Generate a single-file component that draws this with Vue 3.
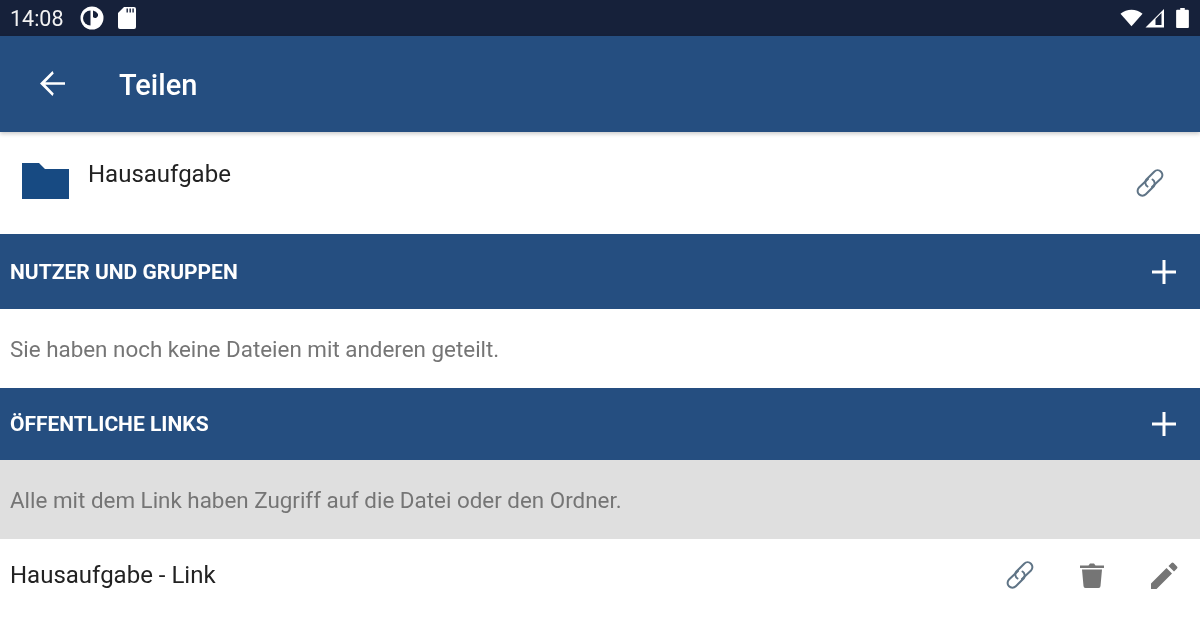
<script setup>
const sections = {
  users: 'NUTZER UND GRUPPEN',
  links: 'ÖFFENTLICHE LINKS'
}
</script>

<template>
  <div class="screen">
    <!-- status bar -->
    <div class="status-bar">
      <span class="clock">14:08</span>
      <svg class="st-circle" viewBox="0 0 24 24" width="24" height="24">
        <circle cx="12" cy="12" r="11.500" fill="#fff" />
        <path d="M10.500 4.500a7.500 7.500 0 0 0 0 15z" fill="#16213a" />
        <path d="M13 4.600a7.500 7.500 0 0 1 5 3.400 3 3 0 0 1-5 3z" fill="#16213a" />
      </svg>
      <svg class="st-sd" viewBox="0 0 18 22" width="18" height="22">
        <path d="M6 0h10a2 2 0 0 1 2 2v18a2 2 0 0 1-2 2H2a2 2 0 0 1-2-2V6z" fill="#fff" />
        <path d="M8.500 1.500h1.400v4H8.500zM11.500 1.500h1.400v4h-1.400zM14.400 1.500h1.400v4h-1.400z" fill="#16213a" />
      </svg>
      <div class="st-right">
        <svg viewBox="0 0 24 18" width="23" height="18">
          <path d="M12 17.500 0.500 4.500C4 1.800 7.800 0.500 12 0.500s8 1.300 11.500 4z" fill="#fff" />
        </svg>
        <svg viewBox="0 0 20 20" width="20" height="20">
          <path d="M0.500 19.500 19 1v18.500z" fill="#fff" />
          <path d="M10.500 14V11L16.500 5v12h-6z" fill="#16213a" />
        </svg>
        <svg class="st-battery" viewBox="0 0 14 22" width="13" height="20">
          <path d="M4.500 0h5v2H13a1 1 0 0 1 1 1v18a1 1 0 0 1-1 1H1a1 1 0 0 1-1-1V3a1 1 0 0 1 1-1h3.500z" fill="#fff" />
        </svg>
      </div>
    </div>

    <header class="toolbar">
      <svg class="back" viewBox="4 4 16 16" width="25" height="25">
        <path d="M20 11.200H7.400l5.400-5.600L12 4l-8 8 8 8 .8-1.600-5.400-5.600H20z" fill="#fff" />
      </svg>
      <h1>Teilen</h1>
    </header>

    <section class="file-row">
      <svg class="folder" viewBox="0 0 47 36" width="47" height="36">
        <path d="M0 0h17l6 6h24v30H0z" fill="#174a82" />
      </svg>
      <span class="file-name">Hausaufgabe</span>
      <svg class="file-link" viewBox="0 0 32 32" width="32" height="32">
        <g fill="none" stroke="#5f7486" stroke-width="2" stroke-linecap="round">
          <path d="M14 12 5 20.500a4.800 4.800 0 0 0 6.800 6.800l8-8a4.800 4.800 0 0 0-1.300-6.800" />
          <path d="M18 20l9-8.500a4.800 4.800 0 0 0-6.800-6.800l-8 8a4.800 4.800 0 0 0 1.300 6.800" />
        </g>
      </svg>
    </section>

    <div class="section-bar bar-users">
      <span>{{ sections.users }}</span>
      <svg viewBox="0 0 24 24" width="24" height="24"><path d="M10.500 0h3v10.500H24v3H13.500V24h-3V13.500H0v-3h10.500z" fill="#fff" /></svg>
    </div>
    <p class="note note-users">Sie haben noch keine Dateien mit anderen geteilt.</p>

    <div class="section-bar bar-links">
      <span>{{ sections.links }}</span>
      <svg viewBox="0 0 24 24" width="24" height="24"><path d="M10.500 0h3v10.500H24v3H13.500V24h-3V13.500H0v-3h10.500z" fill="#fff" /></svg>
    </div>
    <p class="note note-links">Alle mit dem Link haben Zugriff auf die Datei oder den Ordner.</p>

    <section class="link-row">
      <span class="link-name">Hausaufgabe - Link</span>
      <div class="actions">
        <svg viewBox="0 0 32 32" width="32" height="32">
          <g fill="none" stroke="#5f7486" stroke-width="2" stroke-linecap="round">
            <path d="M14 12 5 20.500a4.800 4.800 0 0 0 6.800 6.800l8-8a4.800 4.800 0 0 0-1.300-6.800" />
            <path d="M18 20l9-8.500a4.800 4.800 0 0 0-6.800-6.800l-8 8a4.800 4.800 0 0 0 1.300 6.800" />
          </g>
        </svg>
        <svg viewBox="0 0 24 28" width="24" height="28">
          <path d="M0 4.500h8.500L10 2.500h4l1.500 2H24v2.500H0zM2 8.500h20L20.500 25a2 2 0 0 1-2 2h-13a2 2 0 0 1-2-2z" fill="#757575" />
        </svg>
        <svg class="pencil" viewBox="0 0 28 28" width="28" height="28">
          <path d="M0 22.500V28h5.500L21 12.500 15.500 7zM26 7.500a1.500 1.500 0 0 0 0-2.100L22.600 2a1.500 1.500 0 0 0-2.100 0l-3 3 5.500 5.500z" fill="#757575" />
        </svg>
      </div>
    </section>
  </div>
</template>

<style scoped>
.screen {
  width: 1200px;
  height: 619px;
  overflow: hidden;
  font-family: Roboto, "Noto Sans", sans-serif;
  background: #fff;
  display: flex;
  flex-direction: column;
  filter: blur(0.5px);
}

.status-bar {
  height: 36px;
  flex: none;
  background: #16213a;
  color: #f2f2f2;
  display: flex;
  align-items: center;
  padding: 0 11px 0 10px;
}
.clock { font-size: 21.500px; width: 70px; }
.st-sd { margin-left: 14px; margin-top: -1px; }
.st-right { margin-left: auto; display: flex; align-items: center; gap: 2px; }
.st-battery { margin-left: 9px; }

.toolbar {
  height: 96px;
  flex: none;
  background: #254e80;
  color: #fff;
  display: flex;
  align-items: center;
  padding-left: 40px;
  box-shadow: 0 2px 4px rgba(0, 0, 0, 0.2);
  position: relative;
}
.toolbar h1 { margin: 2px 0 0 54px; font-size: 29px; font-weight: 500; }
.back { margin-top: -1px; }

.file-row {
  height: 102px;
  box-sizing: border-box;
  flex: none;
  display: flex;
  align-items: flex-start;
  padding: 30px 34px 0 22px;
}
.folder { margin-top: 1px; }
.file-name { margin-left: 19px; font-size: 24px; color: #222; line-height: 24px; }
.file-link { margin-left: auto; margin-top: 5px; }

.section-bar {
  flex: none;
  background: #254e80;
  color: #fff;
  font-size: 21px;
  font-weight: 700;
  display: flex;
  align-items: center;
  justify-content: space-between;
  padding: 0 24px 0 10px;
}
.bar-users { height: 75px; }
.bar-links { height: 72px; }

.note {
  flex: none;
  margin: 0;
  padding-left: 10px;
  font-size: 22.400px;
  color: #757575;
  display: flex;
  align-items: center;
}
.note-users { height: 79px; }
.note-links { height: 79px; background: #dfdfdf; }

.link-row {
  flex: 1;
  box-sizing: border-box;
  display: flex;
  align-items: center;
  justify-content: space-between;
  padding: 0 21px 8px 10px;
}
.link-name { font-size: 24px; color: #222; }
.actions { display: flex; align-items: center; gap: 44px; }
.pencil { margin-left: 3px; }
</style>
